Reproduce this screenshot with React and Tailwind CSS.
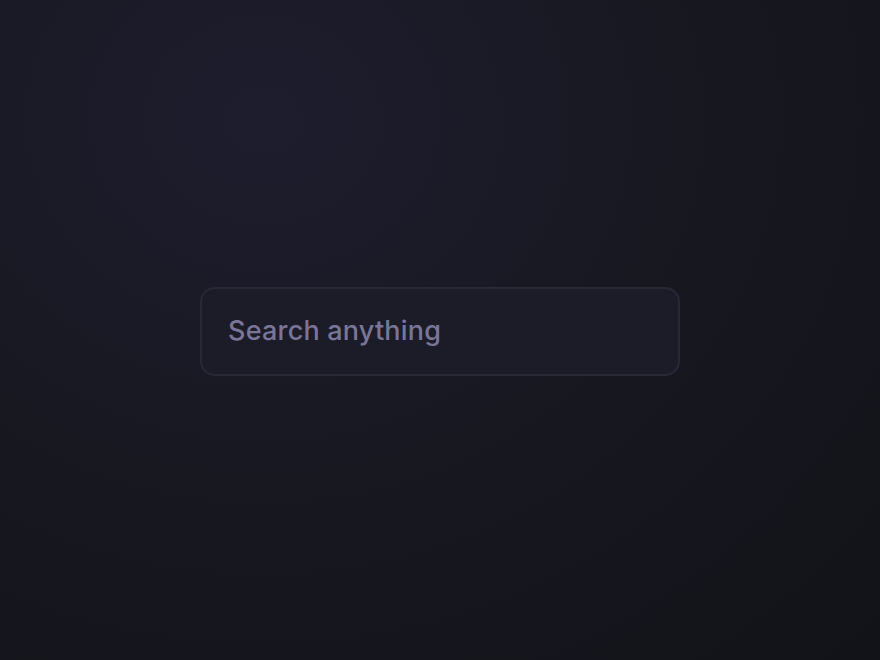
export default function App() {
  return (
    <div className="h-[660px] w-full bg-[radial-gradient(ellipse_at_30%_18%,#1e1d2e_0%,#17171f_55%,#121219_100%)] flex items-center justify-center pt-[2px] font-['Inter',sans-serif]">
      <div className="w-[480px] h-[89px] rounded-[15px] border-2 border-[#292836] bg-[#1c1b28] flex items-center px-[26px]">
        <input
          type="text"
          placeholder="Search anything"
          className="w-full bg-transparent outline-none text-[27px] tracking-[0.2px] font-medium text-[#d0cde0] placeholder:text-[#7a7698]"
        />
      </div>
    </div>
  );
}
